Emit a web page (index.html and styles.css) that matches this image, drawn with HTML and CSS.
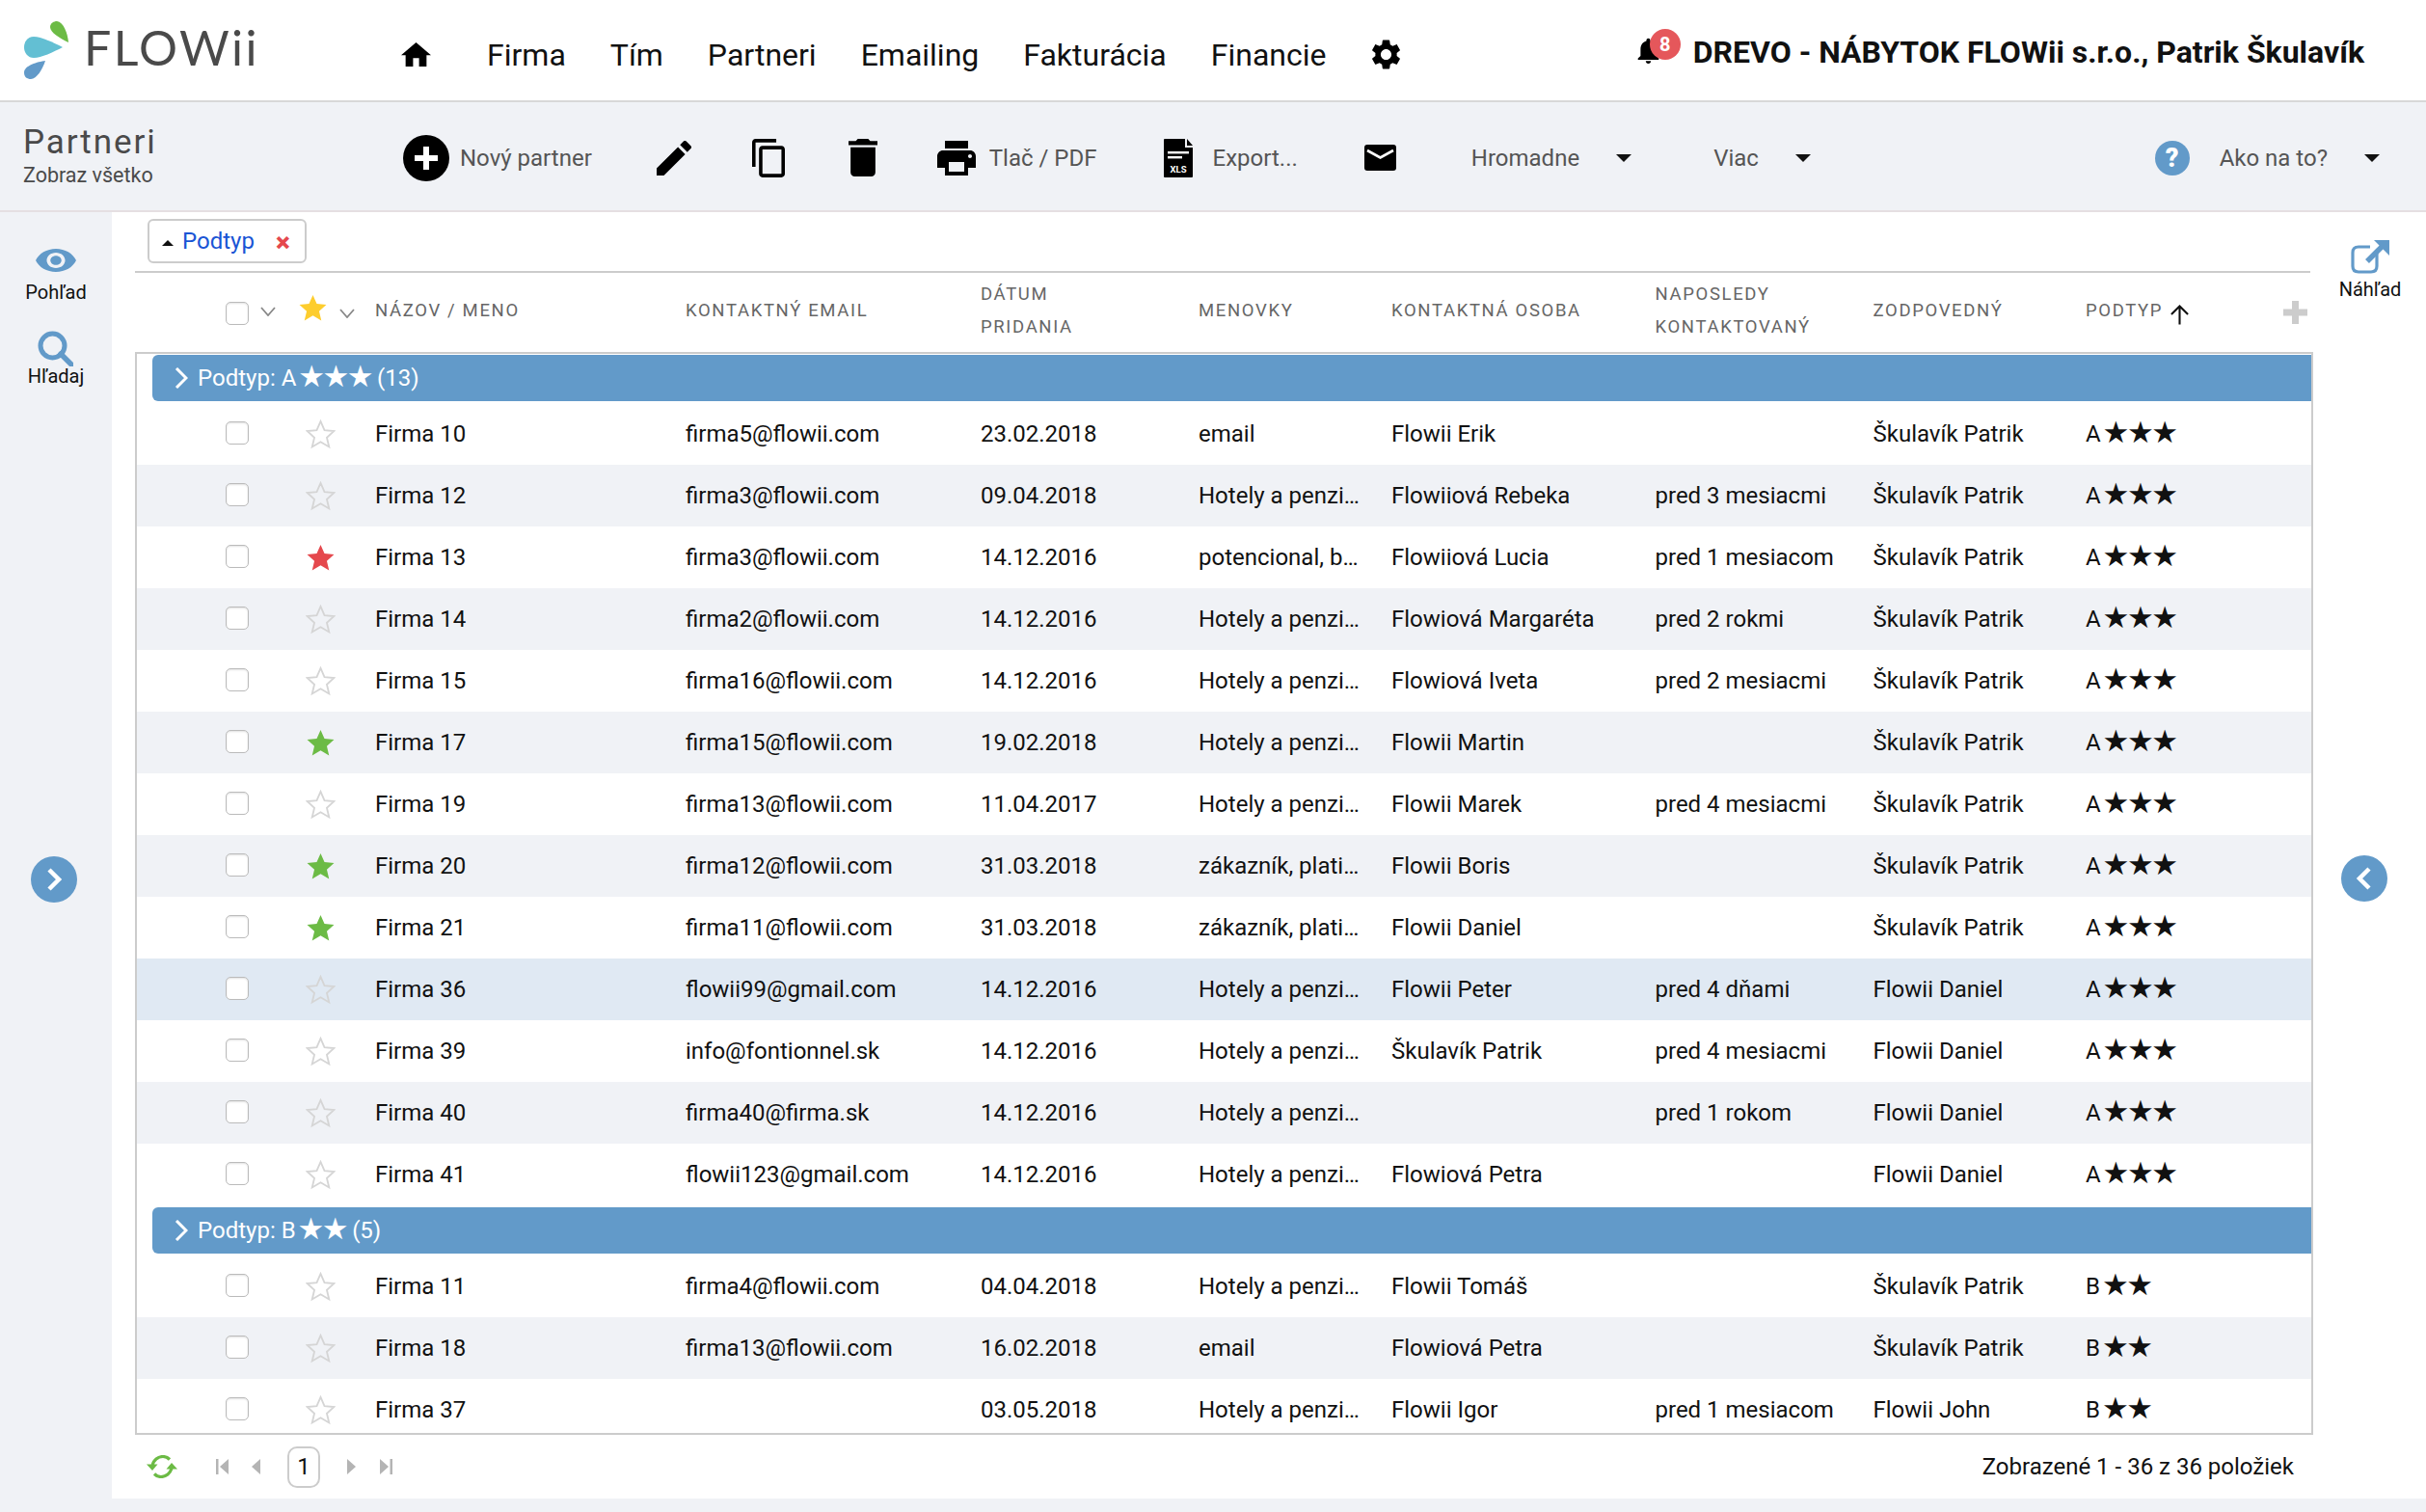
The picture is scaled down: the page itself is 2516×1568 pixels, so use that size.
FILE: index.html
```html
<!DOCTYPE html>
<html lang="sk">
<head>
<meta charset="utf-8">
<title>Partneri</title>
<link rel="stylesheet" href="styles.css">
</head>
<body>
<svg class="sprite" aria-hidden="true"><symbol id="star" viewBox="0 0 24 24"><polygon points="12,1.5 15.1,8.6 22.8,9.3 17,14.5 18.8,22 12,18 5.2,22 7,14.5 1.2,9.3 8.9,8.6"/></symbol></svg>

<header class="topbar">
  <div class="brand">
    <svg class="logo-mark" viewBox="0 0 47 60"><path fill="#6cbb45" d="M46 22C38 18 27 12 27 6C27 2 31 0 34 0C41 1 45 12 46 22Z"/><path fill="#63bfd3" d="M40 27C30 22 18 16 10 16C3 16 0 22 0 27C0 33 4 38 10 38C18 38 30 32 40 27Z"/><path fill="#629ac9" d="M22 41C14 42 0 46 0 53C0 58 3 60 7 60C13 60 19 50 22 41Z"/></svg>
    <span class="logo-text">FLOWii</span>
  </div>
  <nav class="nav">
    <svg class="ico-home" viewBox="2 3 20 17" preserveAspectRatio="none"><path d="M10 20v-6h4v6h5v-8h3L12 3 2 12h3v8z"/></svg>
    <a class="nav-link nav-first">Firma</a>
    <a class="nav-link">Tím</a>
    <a class="nav-link">Partneri</a>
    <a class="nav-link">Emailing</a>
    <a class="nav-link">Fakturácia</a>
    <a class="nav-link">Financie</a>
    <svg class="ico-gear" viewBox="2 2 20 20"><path d="M19.14 12.94c.04-.3.06-.61.06-.94 0-.32-.02-.64-.07-.94l2.03-1.58c.18-.14.23-.41.12-.61l-1.92-3.32c-.12-.22-.37-.29-.59-.22l-2.39.96c-.5-.38-1.03-.7-1.62-.94l-.36-2.54c-.04-.24-.24-.41-.48-.41h-3.84c-.24 0-.43.17-.47.41l-.36 2.54c-.59.24-1.13.57-1.62.94l-2.39-.96c-.22-.08-.47 0-.59.22L2.74 8.87c-.12.21-.08.47.12.61l2.03 1.58c-.05.3-.09.63-.09.94s.02.64.07.94l-2.03 1.58c-.18.14-.23.41-.12.61l1.92 3.32c.12.22.37.29.59.22l2.39-.96c.5.38 1.03.7 1.62.94l.36 2.54c.05.24.24.41.48.41h3.84c.24 0 .44-.17.47-.41l.36-2.54c.59-.24 1.13-.56 1.62-.94l2.39.96c.22.08.47 0 .59-.22l1.92-3.32c.12-.22.07-.47-.12-.61l-2.01-1.58zM12 15.6c-1.98 0-3.6-1.62-3.6-3.6s1.62-3.6 3.6-3.6 3.6 1.62 3.6 3.6-1.62 3.6-3.6 3.6z"/></svg>
  </nav>
  <div class="account">
    <div class="bell">
      <svg class="ico-bell" viewBox="4 2 16 20"><path d="M12 22c1.1 0 2-.9 2-2h-4c0 1.1.89 2 2 2zm6-6v-5c0-3.07-1.64-5.64-4.5-6.32V4c0-.83-.67-1.5-1.5-1.5s-1.5.67-1.5 1.5v.68C7.63 5.36 6 7.92 6 11v5l-2 2v1h16v-1l-2-2z"/></svg>
      <span class="badge">8</span>
    </div>
    <span class="account-name">DREVO - NÁBYTOK FLOWii s.r.o., Patrik Škulavík</span>
  </div>
</header>

<section class="toolbar">
  <div class="page-title">
    <div class="title">Partneri</div>
    <div class="subtitle">Zobraz všetko</div>
  </div>
  <svg class="ico-new" viewBox="0 0 48 48"><circle cx="24" cy="24" r="24"/><path d="M24 12v24M12 24h24" stroke="#fff" stroke-width="6"/></svg>
  <span class="tb-label tb-new-label">Nový partner</span>
  <svg class="ico-pencil" viewBox="3 3 18 18"><path d="M3 17.25V21h3.75L17.81 9.94l-3.75-3.75L3 17.25zM20.71 7.04a1 1 0 0 0 0-1.41l-2.34-2.34a1 1 0 0 0-1.41 0l-1.83 1.83 3.75 3.75 1.83-1.83z"/></svg>
  <svg class="ico-copy" viewBox="2 1 19 22" preserveAspectRatio="none"><path d="M16 1H4c-1.1 0-2 .9-2 2v14h2V3h12V1zm3 4H8c-1.1 0-2 .9-2 2v14c0 1.1.9 2 2 2h11c1.1 0 2-.9 2-2V7c0-1.1-.9-2-2-2zm0 16H8V7h11v14z"/></svg>
  <svg class="ico-trash" viewBox="5 3 14 18" preserveAspectRatio="none"><path d="M6 19c0 1.1.9 2 2 2h8c1.1 0 2-.9 2-2V7H6v12zM19 4h-3.5l-1-1h-5l-1 1H5v2h14V4z"/></svg>
  <svg class="ico-print" viewBox="2 3 20 18" preserveAspectRatio="none"><path d="M19 8H5c-1.66 0-3 1.34-3 3v6h4v4h12v-4h4v-6c0-1.66-1.34-3-3-3zm-3 11H8v-5h8v5zm3-7c-.55 0-1-.45-1-1s.45-1 1-1 1 .45 1 1-.45 1-1 1zm-1-9H6v4h12V3z"/></svg>
  <span class="tb-label tb-print-label">Tlač / PDF</span>
  <svg class="ico-xls" viewBox="0 0 30 40"><path d="M1 0H22V9H30V39a1 1 0 0 1-1 1H1a1 1 0 0 1-1-1V1a1 1 0 0 1 1-1ZM24 0L30 7H24Z"/><rect x="4" y="13" width="22" height="2.4" fill="#fff"/><rect x="4" y="18" width="15" height="2.4" fill="#fff"/><text x="15" y="35" class="xls-text">XLS</text></svg>
  <span class="tb-label tb-export-label">Export...</span>
  <svg class="ico-mail" viewBox="0 0 33 27"><rect width="33" height="27" rx="3"/><path d="M3 6l13.500 7.500L30 6" fill="none" stroke="#fff" stroke-width="2.600"/></svg>
  <span class="tb-label tb-bulk">Hromadne</span>
  <span class="caret caret-gap"></span>
  <span class="tb-label tb-more">Viac</span>
  <span class="caret caret-gap"></span>
  <span class="help">?</span>
  <span class="tb-label tb-help-label">Ako na to?</span>
  <span class="caret caret-gap"></span>
</section>

<main class="main">
  <aside class="rail-left">
    <div class="rail-item">
      <svg class="ico-eye" viewBox="1 4.500 22 15" preserveAspectRatio="none"><path d="M12 4.500C7 4.500 2.730 7.610 1 12c1.730 4.390 6 7.500 11 7.500s9.270-3.110 11-7.500c-1.730-4.390-6-7.500-11-7.500zM12 17c-2.760 0-5-2.240-5-5s2.240-5 5-5 5 2.240 5 5-2.240 5-5 5zm0-8c-1.660 0-3 1.340-3 3s1.340 3 3 3 3-1.340 3-3-1.340-3-3-3z"/></svg>
      <span class="rail-label">Pohľad</span>
    </div>
    <div class="rail-item rail-search">
      <svg class="ico-search" viewBox="0 0 37 37"><circle cx="15.500" cy="15.500" r="12.500" fill="none" stroke="#629ac9" stroke-width="5"/><path d="M24 24l11 11" stroke="#629ac9" stroke-width="5.500" stroke-linecap="round"/></svg>
      <span class="rail-label">Hľadaj</span>
    </div>
    <button class="round round-left"><svg viewBox="0 0 48 48"><path d="M19 14l10 10-10 10" fill="none" stroke="#fff" stroke-width="4.500"/></svg></button>
  </aside>

  <div class="content">
    <div class="chips">
      <span class="chip"><i class="chip-tri"></i><span class="chip-text">Podtyp</span><span class="chip-x">×</span></span>
    </div>
    <div class="row head">
      <span class="c-check"><span class="box"></span><svg class="chev" viewBox="0 0 16 10"><path d="M1 1l7 8 7-8" fill="none" stroke="#888" stroke-width="1.800"/></svg></span>
      <span class="c-star"><svg class="star star-gold"><use href="#star"/></svg><svg class="chev chev-star" viewBox="0 0 16 10"><path d="M1 1l7 8 7-8" fill="none" stroke="#888" stroke-width="1.800"/></svg></span>
      <span>NÁZOV / MENO</span>
      <span>KONTAKTNÝ EMAIL</span>
      <span>DÁTUM<br>PRIDANIA</span>
      <span>MENOVKY</span>
      <span>KONTAKTNÁ OSOBA</span>
      <span>NAPOSLEDY<br>KONTAKTOVANÝ</span>
      <span>ZODPOVEDNÝ</span>
      <span class="c-sort">PODTYP<svg class="ico-sort" viewBox="0 0 22 22"><path d="M11 22V2M2 11l9-9 9 9" fill="none" stroke="#111" stroke-width="2.200"/></svg><svg class="ico-add" viewBox="0 0 25 24"><path d="M12.500 0v24M0 12h25" stroke="#ccc" stroke-width="7"/></svg></span>
    </div>
    <div class="grid-box">
      <div class="group"><svg class="group-chev" viewBox="0 0 14 22"><path d="M2 1l10 10L2 21" fill="none" stroke="#fff" stroke-width="3"/></svg><span>Podtyp: A <span class="stars">★★★</span> (13)</span></div>
      <div class="row"><span class="c-check"><span class="box"></span></span><span class="c-star"><svg class="star star-off"><use href="#star"/></svg></span><span>Firma 10</span><span>firma5@flowii.com</span><span>23.02.2018</span><span>email</span><span>Flowii Erik</span><span></span><span>Škulavík Patrik</span><span>A <span class="stars">★★★</span></span></div>
      <div class="row alt"><span class="c-check"><span class="box"></span></span><span class="c-star"><svg class="star star-off"><use href="#star"/></svg></span><span>Firma 12</span><span>firma3@flowii.com</span><span>09.04.2018</span><span>Hotely a penzi…</span><span>Flowiiová Rebeka</span><span>pred 3 mesiacmi</span><span>Škulavík Patrik</span><span>A <span class="stars">★★★</span></span></div>
      <div class="row"><span class="c-check"><span class="box"></span></span><span class="c-star"><svg class="star star-red"><use href="#star"/></svg></span><span>Firma 13</span><span>firma3@flowii.com</span><span>14.12.2016</span><span>potencional, b…</span><span>Flowiiová Lucia</span><span>pred 1 mesiacom</span><span>Škulavík Patrik</span><span>A <span class="stars">★★★</span></span></div>
      <div class="row alt"><span class="c-check"><span class="box"></span></span><span class="c-star"><svg class="star star-off"><use href="#star"/></svg></span><span>Firma 14</span><span>firma2@flowii.com</span><span>14.12.2016</span><span>Hotely a penzi…</span><span>Flowiová Margaréta</span><span>pred 2 rokmi</span><span>Škulavík Patrik</span><span>A <span class="stars">★★★</span></span></div>
      <div class="row"><span class="c-check"><span class="box"></span></span><span class="c-star"><svg class="star star-off"><use href="#star"/></svg></span><span>Firma 15</span><span>firma16@flowii.com</span><span>14.12.2016</span><span>Hotely a penzi…</span><span>Flowiová Iveta</span><span>pred 2 mesiacmi</span><span>Škulavík Patrik</span><span>A <span class="stars">★★★</span></span></div>
      <div class="row alt"><span class="c-check"><span class="box"></span></span><span class="c-star"><svg class="star star-green"><use href="#star"/></svg></span><span>Firma 17</span><span>firma15@flowii.com</span><span>19.02.2018</span><span>Hotely a penzi…</span><span>Flowii Martin</span><span></span><span>Škulavík Patrik</span><span>A <span class="stars">★★★</span></span></div>
      <div class="row"><span class="c-check"><span class="box"></span></span><span class="c-star"><svg class="star star-off"><use href="#star"/></svg></span><span>Firma 19</span><span>firma13@flowii.com</span><span>11.04.2017</span><span>Hotely a penzi…</span><span>Flowii Marek</span><span>pred 4 mesiacmi</span><span>Škulavík Patrik</span><span>A <span class="stars">★★★</span></span></div>
      <div class="row alt"><span class="c-check"><span class="box"></span></span><span class="c-star"><svg class="star star-green"><use href="#star"/></svg></span><span>Firma 20</span><span>firma12@flowii.com</span><span>31.03.2018</span><span>zákazník, plati…</span><span>Flowii Boris</span><span></span><span>Škulavík Patrik</span><span>A <span class="stars">★★★</span></span></div>
      <div class="row"><span class="c-check"><span class="box"></span></span><span class="c-star"><svg class="star star-green"><use href="#star"/></svg></span><span>Firma 21</span><span>firma11@flowii.com</span><span>31.03.2018</span><span>zákazník, plati…</span><span>Flowii Daniel</span><span></span><span>Škulavík Patrik</span><span>A <span class="stars">★★★</span></span></div>
      <div class="row selected"><span class="c-check"><span class="box"></span></span><span class="c-star"><svg class="star star-off"><use href="#star"/></svg></span><span>Firma 36</span><span>flowii99@gmail.com</span><span>14.12.2016</span><span>Hotely a penzi…</span><span>Flowii Peter</span><span>pred 4 dňami</span><span>Flowii Daniel</span><span>A <span class="stars">★★★</span></span></div>
      <div class="row"><span class="c-check"><span class="box"></span></span><span class="c-star"><svg class="star star-off"><use href="#star"/></svg></span><span>Firma 39</span><span>info@fontionnel.sk</span><span>14.12.2016</span><span>Hotely a penzi…</span><span>Škulavík Patrik</span><span>pred 4 mesiacmi</span><span>Flowii Daniel</span><span>A <span class="stars">★★★</span></span></div>
      <div class="row alt"><span class="c-check"><span class="box"></span></span><span class="c-star"><svg class="star star-off"><use href="#star"/></svg></span><span>Firma 40</span><span>firma40@firma.sk</span><span>14.12.2016</span><span>Hotely a penzi…</span><span></span><span>pred 1 rokom</span><span>Flowii Daniel</span><span>A <span class="stars">★★★</span></span></div>
      <div class="row"><span class="c-check"><span class="box"></span></span><span class="c-star"><svg class="star star-off"><use href="#star"/></svg></span><span>Firma 41</span><span>flowii123@gmail.com</span><span>14.12.2016</span><span>Hotely a penzi…</span><span>Flowiová Petra</span><span></span><span>Flowii Daniel</span><span>A <span class="stars">★★★</span></span></div>
      <div class="group"><svg class="group-chev" viewBox="0 0 14 22"><path d="M2 1l10 10L2 21" fill="none" stroke="#fff" stroke-width="3"/></svg><span>Podtyp: B <span class="stars">★★</span> (5)</span></div>
      <div class="row"><span class="c-check"><span class="box"></span></span><span class="c-star"><svg class="star star-off"><use href="#star"/></svg></span><span>Firma 11</span><span>firma4@flowii.com</span><span>04.04.2018</span><span>Hotely a penzi…</span><span>Flowii Tomáš</span><span></span><span>Škulavík Patrik</span><span>B <span class="stars">★★</span></span></div>
      <div class="row alt"><span class="c-check"><span class="box"></span></span><span class="c-star"><svg class="star star-off"><use href="#star"/></svg></span><span>Firma 18</span><span>firma13@flowii.com</span><span>16.02.2018</span><span>email</span><span>Flowiová Petra</span><span></span><span>Škulavík Patrik</span><span>B <span class="stars">★★</span></span></div>
      <div class="row"><span class="c-check"><span class="box"></span></span><span class="c-star"><svg class="star star-off"><use href="#star"/></svg></span><span>Firma 37</span><span></span><span>03.05.2018</span><span>Hotely a penzi…</span><span>Flowii Igor</span><span>pred 1 mesiacom</span><span>Flowii John</span><span>B <span class="stars">★★</span></span></div>
    </div>
    <footer class="pager">
      <svg class="ico-refresh" viewBox="0 0 32 24"><path d="M6 11C7 5 12 1.500 17 1.500c3 0 5 1 7 3" fill="none" stroke="#6cbb45" stroke-width="3.200"/><path d="M0 9.500h11.500L6 16z" fill="#6cbb45"/><path d="M26 13c-1 6-6 9.500-11 9.500-3 0-5-1-7-3" fill="none" stroke="#6cbb45" stroke-width="3.200"/><path d="M32 14.500H20.500L26 8z" fill="#6cbb45"/></svg>
      <svg class="pg pg-first" viewBox="0 0 13 16"><path d="M0 0h2.500v16H0zM13 0v16L4 8z"/></svg>
      <svg class="pg pg-prev" viewBox="0 0 9 16"><path d="M9 0v16L0 8z"/></svg>
      <span class="pg-num">1</span>
      <svg class="pg pg-next" viewBox="0 0 9 16"><path d="M0 0v16l9-8z"/></svg>
      <svg class="pg pg-last" viewBox="0 0 13 16"><path d="M13 0h-2.500v16H13zM0 0v16l9-8z"/></svg>
      <span class="pg-info">Zobrazené 1 - 36 z 36 položiek</span>
    </footer>
  </div>

  <aside class="rail-right">
    <div class="preview">
      <svg class="ico-ext" viewBox="0 0 40 35"><path d="M27 14v13c0 4-2 6-6 6H8c-4 0-6-2-6-6V13c0-4 2-6 6-6h12" fill="none" stroke="#629ac9" stroke-width="3.200"/><path d="M17 22L33 6" stroke="#629ac9" stroke-width="5.500"/><path d="M24 0h16v16z" fill="#629ac9"/></svg>
      <span class="rail-label">Náhľad</span>
    </div>
    <button class="round round-right"><svg viewBox="0 0 48 48"><path d="M29 14L19 24l10 10" fill="none" stroke="#fff" stroke-width="4.500"/></svg></button>
  </aside>
</main>
</body>
</html>
```
FILE: styles.css
```css
* { box-sizing: border-box; }
html, body { margin: 0; height: 1568px; }
body {
  width: 2516px;
  overflow: hidden;
  background: #f0f2f6;
  color: #111;
  font-family: Roboto, "Liberation Sans", sans-serif;
  font-size: 24px;
  display: flex;
  flex-direction: column;
}
.sprite { display: none; }

/* top bar */
.topbar {
  height: 106px;
  flex: none;
  background: #fff;
  border-bottom: 2px solid #d8d8d8;
  display: flex;
  align-items: center;
  padding: 0 64px 0 25px;
}
.brand { width: 391px; display: flex; align-items: center; flex: none; }
.logo-mark { width: 47px; height: 60px; flex: none; }
.logo-text {
  margin: 0 0 6px 15px;
  font-family: Lato, sans-serif;
  font-size: 50px;
  letter-spacing: 2.4px;
  color: #4a4a4a;
  line-height: 1;
}
.nav { display: flex; align-items: center; padding-top: 9px; }
.ico-home { width: 31px; height: 25px; }
.nav-link { font-size: 32px; margin-left: 46px; color: #111; }
.nav-first { margin-left: 58px; }
.ico-gear { width: 31px; height: 31px; margin-left: 47px; }
.account { margin-left: auto; display: flex; align-items: center; padding-top: 3px; }
.bell { position: relative; width: 23px; height: 27px; margin: -2px 35px 0 0; }
.ico-bell { width: 23px; height: 27px; display: block; }
.badge {
  position: absolute;
  left: 13px;
  top: -9px;
  width: 32px;
  height: 32px;
  border-radius: 50%;
  background: #e5575b;
  color: #fff;
  font-size: 20px;
  font-weight: 700;
  text-align: center;
  line-height: 32px;
}
.account-name { font-size: 32px; font-weight: 700; }

/* toolbar */
.toolbar {
  height: 114px;
  flex: none;
  display: flex;
  align-items: center;
  padding: 3px 48px 0 25px;
  border-bottom: 2px solid #e5dfe2;
  color: #111;
}
.page-title { width: 394px; flex: none; color: #4a4a4a; margin: -3px 0 0 -1px; }
.title { font-size: 35px; letter-spacing: 1.9px; line-height: 40px; }
.subtitle { font-size: 21.5px; line-height: 28px; }
.tb-label { font-size: 24px; color: #555; white-space: nowrap; }
.ico-new { width: 48px; height: 48px; flex: none; }
.tb-new-label { margin-left: 11px; }
.ico-pencil { width: 36px; height: 36px; margin-left: 67px; flex: none; }
.ico-copy { width: 34px; height: 40px; margin-left: 63px; flex: none; }
.ico-trash { width: 30px; height: 39px; margin-left: 66px; flex: none; }
.ico-print { width: 40px; height: 36px; margin-left: 62px; flex: none; }
.tb-print-label { margin-left: 14px; }
.ico-xls { width: 30px; height: 40px; margin-left: 69px; flex: none; }
.xls-text { font-family: Roboto, sans-serif; font-size: 9.500px; font-weight: 700; fill: #fff; text-anchor: middle; }
.tb-export-label { margin-left: 21px; }
.ico-mail { width: 33px; height: 27px; margin-left: 69px; flex: none; }
.tb-bulk { margin-left: 78px; }
.tb-more { margin-left: 85px; }
.caret {
  width: 0;
  height: 0;
  flex: none;
  border-left: 8px solid transparent;
  border-right: 8px solid transparent;
  border-top: 8px solid #111;
}
.caret-gap { margin-left: 38px; }
.help {
  margin-left: auto;
  width: 36px;
  height: 36px;
  flex: none;
  border-radius: 50%;
  background: #629ac9;
  color: #fff;
  font-size: 27px;
  font-weight: 900;
  text-align: center;
  line-height: 36px;
}
.tb-help-label { margin-left: 31px; }

/* main */
.main { flex: none; height: 1334px; display: flex; background: #fff; }
.rail-left {
  width: 116px;
  flex: none;
  background: #f0f2f6;
  display: flex;
  flex-direction: column;
  align-items: center;
  padding-top: 38px;
}
.rail-item { display: flex; flex-direction: column; align-items: center; }
.rail-label { font-size: 20px; line-height: 28px; color: #111; }
.ico-eye { width: 42px; height: 24px; fill: #629ac9; margin-bottom: 7px; }
.rail-search { margin-top: 26px; }
.ico-search { width: 37px; height: 37px; margin-bottom: -4px; }
.round {
  width: 48px;
  height: 48px;
  padding: 0;
  border: 0;
  border-radius: 50%;
  background: #629ac9;
  display: block;
}
.round svg { width: 48px; height: 48px; display: block; }
.round-left { margin: 484px 4px 0 0; }

.content { width: 2283px; flex: none; padding-left: 24px; display: flex; flex-direction: column; }
.chips { height: 63px; width: 2256px; flex: none; border-bottom: 2px solid #ccc; padding: 7px 0 0 13px; }
.chip {
  width: 165px;
  height: 46px;
  border: 2px solid #ccc;
  border-radius: 6px;
  display: flex;
  align-items: center;
  padding-left: 13px;
}
.chip-tri {
  width: 0;
  height: 0;
  border-left: 6px solid transparent;
  border-right: 6px solid transparent;
  border-bottom: 6px solid #111;
  margin-top: 4px;
}
.chip-text { color: #1a55d5; margin-left: 9px; }
.chip-x { color: #e5484d; font-weight: 900; font-size: 28px; margin-left: 22px; line-height: 1; margin-top: 4px; }

/* rows */
.row {
  display: grid;
  grid-template-columns: 176px 71px 322px 306px 226px 200px 273.5px 226px 220.5px 1fr;
  align-items: center;
  height: 64px;
  white-space: nowrap;
}
.alt { background: #f0f2f6; }
.selected { background: #e0e9f3; }
.head {
  height: 82px;
  flex: none;
  padding: 0 0 5px 2px;
  width: 2259px;
  font-size: 18.5px;
  letter-spacing: 1.65px;
  line-height: 34px;
  color: #666;
}
.c-check { display: flex; align-items: center; padding-left: 92px; }
.c-star { display: flex; align-items: center; }
.box {
  width: 24px;
  height: 24px;
  flex: none;
  margin-bottom: 2px;
  background: #fff;
  border: 1.500px solid #bbb;
  border-radius: 5px;
  box-shadow: inset 0 1px 2px rgba(0,0,0,.12);
}
.head .box { margin: 7px 0 0; }
.chev { width: 16px; height: 10px; margin: 3px 0 0 12px; flex: none; }
.chev-star { margin: 7px 0 0 12.5px; }
.star { width: 31px; height: 31px; flex: none; margin-left: -1.5px; }
.star-off { fill: none; stroke: #d5d5d5; stroke-width: 1.400; }
.star-red { fill: #e5484d; }
.star-green { fill: #6cbb45; }
.star-gold { fill: #fdcd2e; margin: 0 0 4px -9.5px; }
.stars {
  font-family: "DejaVu Sans", sans-serif;
  font-size: 31px;
  line-height: 0;
  letter-spacing: -2.5px;
  margin-left: -4px;
  vertical-align: -1px;
}
.c-sort { display: flex; align-items: center; }
.ico-sort { width: 21px; height: 22px; margin: 8px 0 0 7px; }
.ico-add { width: 25px; height: 24px; margin: 4px 0 0 97px; }

.grid-box {
  width: 2259px;
  height: 123px;
  flex: 1 1 auto;
  border: 2px solid #ccc;
  overflow: hidden;
}
.group {
  height: 48px;
  margin: 2px 0 2px 16px;
  background: #629ac9;
  border-radius: 6px 0 0 6px;
  color: #fff;
  display: flex;
  align-items: center;
  padding-left: 23px;
}
.group:first-child { margin-top: 1px; }
.group-chev { width: 14px; height: 22px; margin-right: 10px; flex: none; }
.group .stars { color: #fff; }

/* pager */
.pager {
  height: 66px;
  width: 2259px;
  flex: none;
  display: flex;
  align-items: center;
  padding-left: 12px;
}
.ico-refresh { width: 32px; height: 24px; flex: none; }
.pg { fill: #b4b4b4; height: 16px; flex: none; }
.pg-first { width: 13px; margin-left: 40px; }
.pg-prev { width: 9px; margin-left: 24px; }
.pg-num {
  width: 34px;
  height: 43px;
  margin-left: 28px;
  border: 2px solid #ccc;
  border-radius: 10px;
  text-align: center;
  line-height: 39px;
}
.pg-next { width: 9px; margin-left: 28px; }
.pg-last { width: 13px; margin-left: 25px; }
.pg-info { margin-left: auto; margin-right: 20px; }

.rail-right { width: 117px; flex: none; display: flex; flex-direction: column; padding-top: 29px; }
.preview { width: 64px; margin-left: 27px; display: flex; flex-direction: column; align-items: center; }
.ico-ext { width: 40px; height: 35px; margin-bottom: 2px; }
.round-right { margin: 573px 0 0 29px; }
```
